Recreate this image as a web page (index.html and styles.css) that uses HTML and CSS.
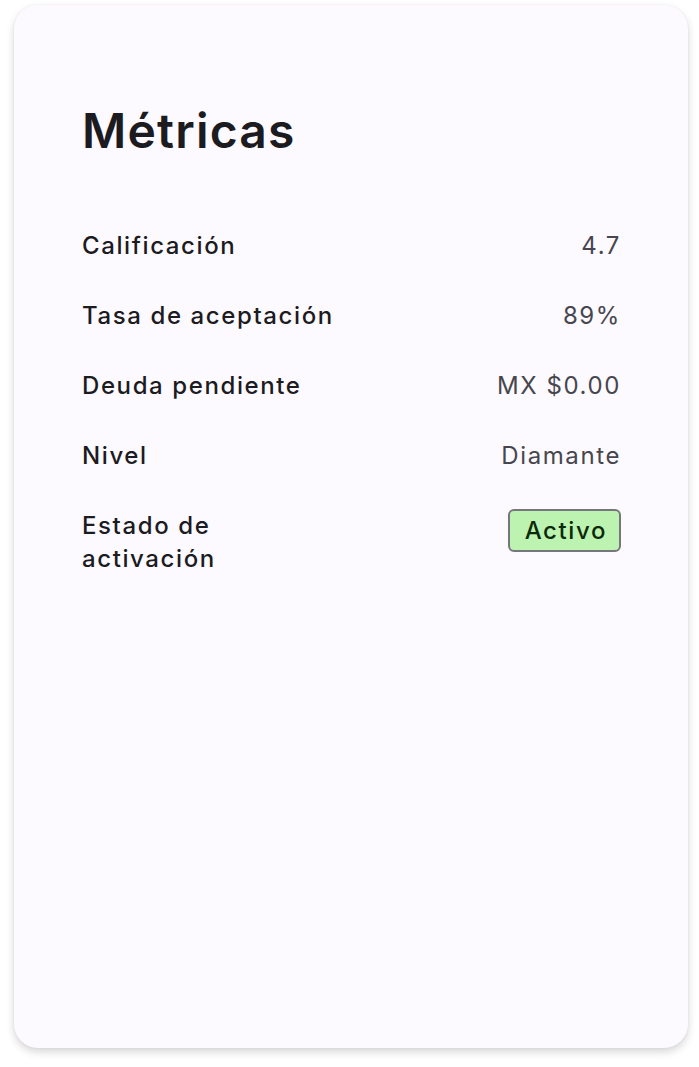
FILE: index.html
```html
<!DOCTYPE html>
<html lang="es">
<head>
    <meta charset="UTF-8">
    <meta name="viewport" content="width=device-width, initial-scale=1.0">
    <title>Métricas</title>
    <link rel="stylesheet" href="styles.css">
</head>
<body>

<div class="card">
    <h1>Métricas</h1>

    <div class="metrics">
        <div class="row">
            <span class="label">Calificación</span>
            <span class="value">4.7</span>
        </div>
        <div class="row">
            <span class="label">Tasa de aceptación</span>
            <span class="value">89%</span>
        </div>
        <div class="row">
            <span class="label">Deuda pendiente</span>
            <span class="value">MX $0.00</span>
        </div>
        <div class="row">
            <span class="label">Nivel</span>
            <span class="value">Diamante</span>
        </div>
        <div class="row">
            <span class="label">Estado de activación</span>
            <span class="value"><span class="badge">Activo</span></span>
        </div>
    </div>
</div>

</body>
</html>
```

FILE: styles.css
```css
body {
    font-family: Inter, "Noto Sans", sans-serif;
    background-color: #ffffff;
    margin: 0;
    padding: 5px 11px 19px 14px;
}
.card {
    background-color: #fcfaff;
    border-radius: 24px;
    box-shadow: 0 4px 8px rgba(0, 0, 0, 0.16), 0 0 3px rgba(0, 0, 0, 0.05);
    height: 1043px;
    box-sizing: border-box;
    padding: 94px 68px 0 68px;
}
h1 {
    margin: 0 0 66px 0;
    font-size: 48px;
    font-weight: 600;
    line-height: 64px;
    letter-spacing: 1.2px;
    color: #1c1b1f;
}
.metrics {
    display: flex;
    flex-direction: column;
    gap: 37px;
}
.row {
    display: grid;
    grid-template-columns: 1fr 1fr;
    gap: 16px;
    font-size: 24px;
    line-height: 33px;
    letter-spacing: 1.6px;
}
.label {
    color: #1c1b1f;
    font-weight: 450;
}
.value {
    color: #47464f;
    text-align: right;
    margin-right: -1px;
}
.badge {
    display: inline-block;
    margin-top: 0;
    background-color: #bdf3b0;
    border: 2px solid #78767d;
    border-radius: 6px;
    padding: 3px 12px 3px 15px;
    color: #0c2a0a;
    font-weight: 450;
}
```
